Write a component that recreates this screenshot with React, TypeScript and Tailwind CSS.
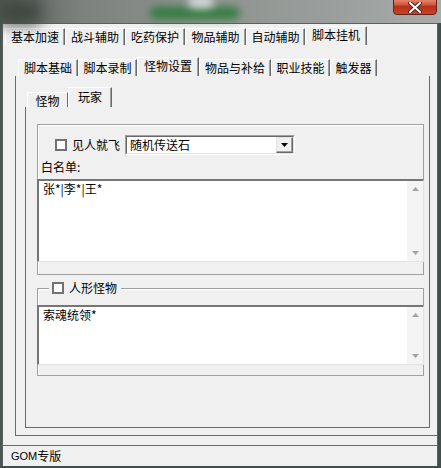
import React from 'react';

type TabItem = { label: string; w: string; active?: boolean };

const topTabs: TabItem[] = [
  { label: '基本加速', w: 'w-[60px]' },
  { label: '战斗辅助', w: 'w-[60px]' },
  { label: '吃药保护', w: 'w-[60px]' },
  { label: '物品辅助', w: 'w-[61px]' },
  { label: '自动辅助', w: 'w-[59px]' },
  { label: '脚本挂机', w: 'w-[62px]', active: true },
];

const subTabs: TabItem[] = [
  { label: '脚本基础', w: 'w-[60px]' },
  { label: '脚本录制', w: 'w-[59px]' },
  { label: '怪物设置', w: 'w-[62px]', active: true },
  { label: '物品与补给', w: 'w-[72px]' },
  { label: '职业技能', w: 'w-[59px]' },
  { label: '触发器', w: 'w-[47px]' },
];

const Tab: React.FC<{ item: TabItem }> = ({ item }) => (
  <div
    className={`${item.w} ${
      item.active ? 'h-[19px] pb-[2px]' : 'h-[17px]'
    } flex items-center justify-center border-t border-l border-r border-t-white border-l-white border-r-[#696969] shadow-[inset_-1px_0_0_#a0a0a0] text-[12px] leading-[14px] text-black`}
  >
    {item.label}
  </div>
);

const Arrow: React.FC<{ up?: boolean }> = ({ up }) => (
  <svg width="7" height="4" viewBox="0 0 7 4">
    <path d={up ? 'M0 4 L3.5 0 L7 4 Z' : 'M0 0 L3.5 4 L7 0 Z'} fill="#a3a3a3" />
  </svg>
);

const Memo: React.FC<{ text: string; h: string }> = ({ text, h }) => (
  <div
    className={`${h} -mx-[1px] flex bg-white border-t-2 border-l-2 border-b border-r border-t-[#767676] border-l-[#767676] border-b-[#e3e3e3] border-r-[#e3e3e3]`}
  >
    <div className="flex-1 pl-[4px] pt-[1px] text-[12px] leading-[14px] text-black">{text}</div>
    <div className="w-[16px] flex flex-col justify-between bg-[#f4f4f4]">
      <div className="h-[16px] flex items-center justify-center">
        <Arrow up />
      </div>
      <div className="h-[16px] flex items-center justify-center">
        <Arrow />
      </div>
    </div>
  </div>
);

const CheckBox: React.FC = () => (
  <div className="w-[12px] h-[12px] border-2 border-[#727272] bg-white shrink-0" />
);

export default function App() {
  return (
    <div className="w-[441px] h-[468px] relative overflow-hidden flex flex-col bg-[linear-gradient(90deg,#525a55_0%,#7c817d_18%,#8e928f_45%,#9a9e9c_75%,#a7abab_100%)] font-['Noto_Sans_CJK_SC','Liberation_Sans',sans-serif]">
      {/* blurred scene behind the glass frame */}
      <div className="absolute left-[150px] top-[7px] w-[90px] h-[12px] rounded-full bg-[#2f7c3c] blur-[4px]" />
      <div className="absolute left-[188px] top-[-4px] w-[26px] h-[12px] rounded-full bg-[#d6dcdc] blur-[4px]" />
      <div className="absolute left-[0px] top-[0px] w-[40px] h-[24px] bg-[#3f463f] blur-[8px]" />

      {/* close button */}
      <div className="absolute left-[393px] top-[-4px] w-[44px] h-[19px] rounded-b-[4px] border border-[#6b1f12] bg-[linear-gradient(180deg,#eba08a_0%,#d4583a_45%,#b8301a_55%,#c8442a_100%)] flex items-center justify-center pt-[3px] z-10">
        <svg width="14" height="11" viewBox="0 0 14 11">
          <path d="M2 1 L12 10 M12 1 L2 10" stroke="#3a2a2a" strokeWidth="4" strokeLinecap="round" />
          <path d="M2 1 L12 10 M12 1 L2 10" stroke="#ffffff" strokeWidth="2" strokeLinecap="round" />
        </svg>
      </div>

      <div className="h-[23px] shrink-0" />

      <div className="flex-1 flex">
        <div className="w-[2px] bg-[#485754]" />
        <div className="flex-1 flex flex-col bg-[#f0f0f0] border-t border-l border-r border-t-[#5e5e5e] border-l-[#5e5e5e] border-r-[#5e5e5e]">
          {/* top tabs */}
          <div className="h-[21px] flex items-end pl-[2px]">
            {topTabs.map((t) => (
              <Tab key={t.label} item={t} />
            ))}
          </div>

          {/* top tab page */}
          <div className="h-[400px] flex flex-col pl-[12px] pt-[12px] pb-[9px]">
            <div className="flex-1 flex flex-col">
              <div className="h-[19px] flex items-end pl-[3px]">
                {subTabs.map((t) => (
                  <Tab key={t.label} item={t} />
                ))}
              </div>

              <div className="flex-1 flex flex-col border-l border-b border-[#696969] pl-[9px] pr-[7px] pb-[7px]">
                <div className="flex-1 flex flex-col border-r border-b border-[#696969]">
                  <div className="h-[31px] flex items-end pl-[2px]">
                    <div className="w-[41px] h-[15px] flex items-center justify-center border-t border-l border-r border-t-white border-l-white border-r-[#696969] text-[12px] leading-[14px] text-black pt-[2px]">
                      怪物
                    </div>
                    <div className="w-[44px] h-[20px] flex items-center justify-center border-t border-l border-r border-t-white border-l-white border-r-[#696969] shadow-[inset_-1px_0_0_#a0a0a0] text-[12px] leading-[14px] text-black pb-[2px]">
                      玩家
                    </div>
                  </div>

                  <div className="flex-1 flex flex-col border-l border-[#696969] pl-[11px] pr-[5px] pt-[17px]">
                    {/* group 1 */}
                    <div className="h-[151px] flex flex-col border border-[#a0a0a0] shadow-[inset_1px_1px_0_#ffffff]">
                      <div className="h-[20px] mt-[10px] flex items-center pl-[17px]">
                        <CheckBox />
                        <span className="ml-[5px] text-[12px] leading-[14px] text-black">见人就飞</span>
                        <div className="ml-[5px] w-[170px] h-[20px] flex border border-t-[#a0a0a0] border-l-[#a0a0a0] border-b-white border-r-white">
                          <div className="flex-1 flex bg-white border border-t-[#696969] border-l-[#696969] border-b-[#e3e3e3] border-r-[#e3e3e3]">
                            <div className="flex-1 pl-[3px] text-[12px] leading-[16px] text-black">随机传送石</div>
                            <div className="w-[17px] flex items-center justify-center bg-[#f0f0f0] border border-t-[#e3e3e3] border-l-[#e3e3e3] border-b-[#696969] border-r-[#696969] shadow-[inset_-1px_-1px_0_#a0a0a0]">
                              <svg width="7" height="4" viewBox="0 0 7 4">
                                <path d="M0 0 L3.5 4 L7 0 Z" fill="#000" />
                              </svg>
                            </div>
                          </div>
                        </div>
                      </div>
                      <div className="h-[14px] mt-[5px] mb-[5px] pl-[3px] text-[12px] leading-[14px] text-black">白名单:</div>
                      <Memo text="张*|李*|王*" h="h-[83px]" />
                      <div className="h-[12px]" />
                    </div>

                    {/* group 2 */}
                    <div className="relative mt-[13px] h-[88px] flex flex-col border border-[#a0a0a0] shadow-[inset_1px_1px_0_#ffffff]">
                      <div className="absolute left-[11px] top-[-8px] flex items-center gap-[5px] pl-[3px] pr-[4px] bg-[#f0f0f0]">
                        <CheckBox />
                        <span className="text-[12px] leading-[14px] text-black">人形怪物</span>
                      </div>
                      <div className="h-[16px]" />
                      <Memo text="索魂统领*" h="h-[60px]" />
                      <div className="h-[10px]" />
                    </div>
                  </div>
                </div>
              </div>
            </div>
          </div>

          {/* status bar */}
          <div className="flex-1 flex items-center border-t border-[#696969] pl-[8px] text-[12px] leading-[14px] text-black">
            <span className="font-['Liberation_Sans',sans-serif] text-[11px]">GOM</span>
            <span>专版</span>
          </div>
        </div>
        <div className="w-[3px] bg-[#3e504c]" />
      </div>
      <div className="h-[2px] bg-[#3e504c] shrink-0" />
    </div>
  );
}
